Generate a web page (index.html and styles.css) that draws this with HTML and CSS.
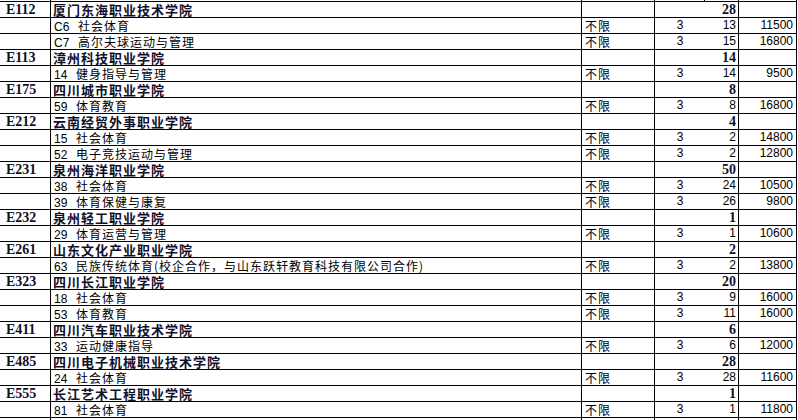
FILE: index.html
```html
<!DOCTYPE html>
<html>
<head>
<meta charset="utf-8">
<link rel="stylesheet" href="styles.css">
</head>
<body>
<div class="sheet">
  <div class="row stub"><div class="c c1"></div><div class="c c2"></div><div class="c c3"></div><div class="c c4 line"></div><div class="c c5"></div><div class="c c6"></div></div>
  <div class="body" id="body"></div>
  <div class="row stub tail"><div class="c c1"></div><div class="c c2"></div><div class="c c3"></div><div class="c c4"></div><div class="c c5"></div><div class="c c6"></div></div>
</div>
<script src="app.js"></script>
</body>
</html>
```

FILE: app.js
```js
const data = [
  ["h","E112","厦门东海职业技术学院","28"],
  ["m","C6","社会体育","13","11500"],
  ["m","C7","高尔夫球运动与管理","15","16800"],
  ["h","E113","漳州科技职业学院","14"],
  ["m","14","健身指导与管理","14","9500"],
  ["h","E175","四川城市职业学院","8"],
  ["m","59","体育教育","8","16800"],
  ["h","E212","云南经贸外事职业学院","4"],
  ["m","15","社会体育","2","14800"],
  ["m","52","电子竞技运动与管理","2","12800"],
  ["h","E231","泉州海洋职业学院","50"],
  ["m","38","社会体育","24","10500"],
  ["m","39","体育保健与康复","26","9800"],
  ["h","E232","泉州轻工职业学院","1"],
  ["m","29","体育运营与管理","1","10600"],
  ["h","E261","山东文化产业职业学院","2"],
  ["m","63","民族传统体育(校企合作，与山东跃轩教育科技有限公司合作)","2","13800"],
  ["h","E323","四川长江职业学院","20"],
  ["m","18","社会体育","9","16000"],
  ["m","53","体育教育","11","16000"],
  ["h","E411","四川汽车职业技术学院","6"],
  ["m","33","运动健康指导","6","12000"],
  ["h","E485","四川电子机械职业技术学院","28"],
  ["m","24","社会体育","28","11600"],
  ["h","E555","长江艺术工程职业学院","1"],
  ["m","81","社会体育","1","11800"]
];
const body = document.getElementById("body");
function cell(cls, txt) {
  const d = document.createElement("div");
  d.className = cls;
  if (txt !== undefined) d.textContent = txt;
  return d;
}
for (const r of data) {
  const row = document.createElement("div");
  row.className = "row";
  if (r[0] === "h") {
    row.append(
      cell("c c1 code", r[1]), cell("c c2 name", r[2]), cell("c c3"),
      cell("c c4"), cell("c c5 bnum", r[3]), cell("c c6")
    );
  } else {
    const c2 = cell("c c2 major");
    const no = document.createElement("span");
    no.className = "mno";
    no.textContent = r[1];
    const nm = document.createElement("span");
    nm.className = "mname";
    nm.textContent = " " + r[2];
    c2.append(no, nm);
    row.append(
      cell("c c1"), c2, cell("c c3 lim", "不限"),
      cell("c c4 yrs", "3"), cell("c c5 num", r[3]), cell("c c6 num fee", r[4])
    );
  }
  body.appendChild(row);
}
```

FILE: styles.css
```css
html, body {
  margin: 0;
  padding: 0;
  background: #ffffff;
  overflow: hidden;
}
.sheet {
  width: 798px;
  font-family: "Noto Sans CJK SC", sans-serif;
  font-size: 12px;
  color: #000;
}
.body {
  border-top: 1px solid #000;
  width: 797px;
}
.row {
  display: grid;
  grid-template-columns: 51px 531px 73px 50px 34px 58px;
  height: 16px;
  box-sizing: border-box;
  border-bottom: 1px solid #000;
}
.stub {
  height: 1px;
  border-bottom: none;
}
.tail {
  height: 4px;
}
.c {
  box-sizing: border-box;
  border-right: 1px solid #000;
  height: 15px;
  line-height: 15px;
  white-space: nowrap;
}
.stub .c { height: 100%; }
.c4 { border-right: none; }
.c4.line { border-right: 1px solid #000; }
.code {
  font-family: "Liberation Serif", serif;
  font-weight: bold;
  font-size: 14px;
  padding-left: 6px;
  color: #10102a;
}
.name {
  font-weight: bold;
  font-size: 13px;
  letter-spacing: 1px;
  padding-left: 2px;
  color: #10102a;
}
.major {
  padding-left: 3px;
}
.mno {
  font-family: "Liberation Sans", sans-serif;
  font-size: 12px;
}
.mname {
  letter-spacing: 1px;
  word-spacing: 5px;
}
.lim {
  padding-left: 3px;
  letter-spacing: 1px;
}
.yrs {
  text-align: center;
  font-family: "Liberation Sans", sans-serif;
  font-size: 12px;
}
.num {
  text-align: right;
  padding-right: 2px;
  font-family: "Liberation Sans", sans-serif;
  font-size: 12px;
}
.fee {
  padding-right: 3px;
}
.bnum {
  text-align: right;
  padding-right: 2px;
  font-family: "Liberation Serif", serif;
  font-weight: bold;
  font-size: 14px;
  color: #10102a;
}
```
